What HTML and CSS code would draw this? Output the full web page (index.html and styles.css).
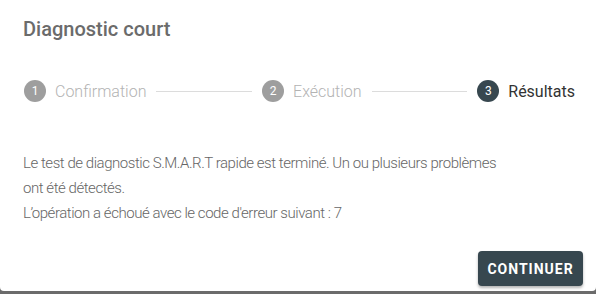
FILE: index.html
```html
<!DOCTYPE html>
<html lang="fr">
<head>
<meta charset="utf-8">
<link rel="stylesheet" href="styles.css">
</head>
<body>
<div class="dialog">
  <h2 class="title">Diagnostic court</h2>
  <div class="stepper">
    <div class="step done">
      <span class="num">1</span><span class="label">Confirmation</span>
    </div>
    <div class="line"></div>
    <div class="step done">
      <span class="num">2</span><span class="label">Exécution</span>
    </div>
    <div class="line"></div>
    <div class="step active">
      <span class="num">3</span><span class="label">Résultats</span>
    </div>
  </div>
  <div class="content">
    <p>Le test de diagnostic S.M.A.R.T rapide est terminé. Un ou plusieurs problèmes ont été détectés.</p>
    <p>L’opération a échoué avec le code d'erreur suivant : 7</p>
  </div>
  <div class="actions">
    <button class="btn">CONTINUER</button>
  </div>
</div>
</body>
</html>
```

FILE: styles.css
```css
html, body {
  margin: 0;
  padding: 0;
}
body {
  width: 596px;
  height: 294px;
  background: #6b6b6b;
  font-family: Roboto, "Liberation Sans", sans-serif;
  overflow: hidden;
}
.dialog {
  box-sizing: border-box;
  width: 596px;
  height: 291px;
  background: #fff;
  border-radius: 0 0 4px 4px;
  padding: 16px 21px 0 23px;
  display: flex;
  flex-direction: column;
}
.title {
  margin: 0;
  font-size: 20px;
  line-height: 26px;
  font-weight: 500;
  color: #6b6b6b;
}
.stepper {
  margin-top: 37px;
  display: flex;
  align-items: center;
  height: 24px;
  margin-left: 1px;
}
.step {
  display: flex;
  align-items: center;
  gap: 9px;
  flex: none;
}
.num {
  width: 22px;
  height: 22px;
  border-radius: 50%;
  background: #9e9e9e;
  color: #fff;
  font-size: 12px;
  line-height: 22px;
  text-align: center;
}
.label {
  font-size: 16px;
  font-weight: 300;
  color: #b3b3b3;
}
.active .num {
  background: #37474f;
}
.active .label {
  color: #333;
  font-weight: 400;
}
.line {
  flex: 1;
  height: 1px;
  background: #dcdcdc;
  margin: 0 10px;
}
.content {
  margin-top: 48px;
  max-width: 490px;
  font-size: 15px;
  letter-spacing: -0.45px;
  line-height: 25px;
  font-weight: 300;
  color: #666;
}
.content p {
  margin: 0;
}
.actions {
  margin-top: 25px;
  margin-right: -8px;
  display: flex;
  justify-content: flex-end;
}
.btn {
  font-family: Roboto, "Liberation Sans", sans-serif;
  background: #37474f;
  color: #fff;
  border: none;
  border-radius: 4px;
  height: 35px;
  width: 105px;
  padding: 0;
  font-size: 14px;
  font-weight: 700;
  letter-spacing: 1px;
  box-shadow: 0 2px 3px rgba(0,0,0,0.3);
}
```
